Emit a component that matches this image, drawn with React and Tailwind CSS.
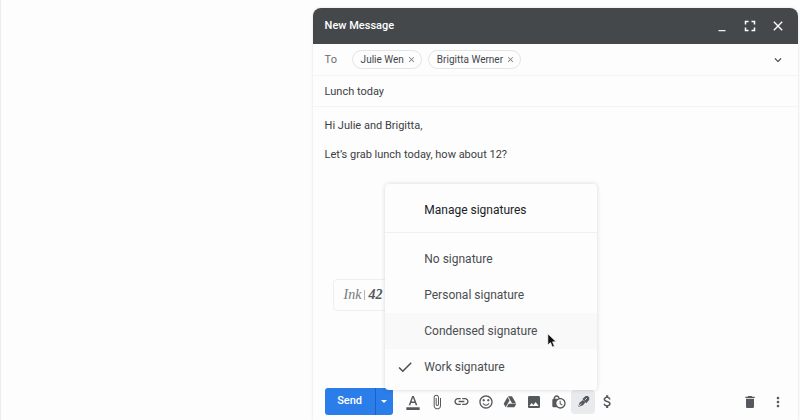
import {
    MdAttachFile,
    MdAttachMoney,
    MdCheck,
    MdClose,
    MdDelete,
    MdExpandMore,
    MdFullscreen,
    MdImage,
    MdInsertLink,
    MdLockClock,
    MdMinimize,
    MdMoreVert,
    MdOutlineFormatColorText,
    MdSentimentSatisfiedAlt,
} from 'react-icons/md';

const recipients = ['Julie Wen', 'Brigitta Werner'];

const signatures = [
    { name: 'No signature' },
    { name: 'Personal signature' },
    { name: 'Condensed signature', hovered: true },
    { name: 'Work signature', checked: true },
];

function DriveIcon({ className }) {
    return (
        <svg viewBox="0 0 24 24" fill="currentColor" className={className}>
            <path d="M7.71 3.5 1.15 15l3.43 6 6.55-11.5zM9.73 15 6.3 21h13.12l3.43-6zM22.28 14 15.42 2H8.58l6.86 12z" />
        </svg>
    );
}

function PenIcon({ className }) {
    return (
        <svg viewBox="0 0 24 24" fill="currentColor" className={className}>
            <path d="M2 22 5 14 11 9 15.500 13.500 11 19z" />
            <path d="m3 21 5-5" stroke="#e8eaed" strokeWidth="1.500" />
            <path d="M10 7.500 16 2h4l2.500 2.500V9l-5.500 6z" />
            <path d="m14.500 9.500 4-4" stroke="#e8eaed" strokeWidth="1.500" />
        </svg>
    );
}

function Cursor() {
    return (
        <svg viewBox="0 0 12 18" className="pointer-events-none absolute top-5 left-[162px] h-[15px] w-[10px]">
            <path d="M1 1v13.5l3.2-3 2.2 5.3 2.5-1-2.2-5.2H11z" fill="#111" stroke="#fff" strokeWidth="0.8" />
        </svg>
    );
}

function SignatureMenu() {
    return (
        <div
            role="menu"
            className="absolute right-[-2px] bottom-full z-10 w-[212px] rounded-sm bg-[#fdfdfd] pt-2 pb-[5px] text-xs text-[#4b4d50] shadow-[0_0_4px_rgba(0,0,0,0.16)]"
        >
            <button type="button" role="menuitem" className="flex h-9 w-full items-center pl-[39px] text-[#202124]">
                Manage signatures
            </button>
            <div className="mt-1 mb-2 border-t border-[#f0f0f0]" />
            {signatures.map((item) => (
                <button
                    key={item.name}
                    type="button"
                    role="menuitemradio"
                    aria-checked={!!item.checked}
                    className={`relative flex h-9 w-full items-center ${item.hovered ? 'bg-[#f9f9f9]' : ''}`}
                >
                    <span className="flex w-[39px] justify-center">{item.checked && <MdCheck className="size-[18px]" />}</span>
                    {item.name}
                    {item.hovered && <Cursor />}
                </button>
            ))}
        </div>
    );
}

function ToolButton({ label, children }) {
    return (
        <button type="button" aria-label={label} className="flex h-6 items-center justify-center">
            {children}
        </button>
    );
}

function Toolbar() {
    return (
        <div className="flex items-center pt-1 pr-2 pb-[5px] pl-3 text-[#55585c]">
            <div className="flex h-[27px] shrink-0 overflow-hidden rounded-[3px] bg-[#2b7de9] text-white">
                <button type="button" className="w-[50px] font-medium">
                    Send
                </button>
                <button type="button" aria-label="More send options" className="flex w-[18px] items-center justify-center border-l border-[#1b62c4]">
                    <svg viewBox="0 0 8 4" fill="currentColor" className="h-[3px] w-[6px]">
                        <path d="M0 0h8L4 4z" />
                    </svg>
                </button>
            </div>
            <div className="ml-2 grid w-[219px] shrink-0 grid-cols-9">
                <ToolButton label="Formatting options">
                    <MdOutlineFormatColorText className="size-4" />
                </ToolButton>
                <ToolButton label="Attach files">
                    <MdAttachFile className="size-4" />
                </ToolButton>
                <ToolButton label="Insert link">
                    <MdInsertLink className="size-[17px]" />
                </ToolButton>
                <ToolButton label="Insert emoji">
                    <MdSentimentSatisfiedAlt className="size-4" />
                </ToolButton>
                <ToolButton label="Insert files using Drive">
                    <DriveIcon className="size-[14px]" />
                </ToolButton>
                <ToolButton label="Insert photo">
                    <MdImage className="size-4" />
                </ToolButton>
                <ToolButton label="Toggle confidential mode">
                    <MdLockClock className="size-4" />
                </ToolButton>
                <div className="relative">
                    <button type="button" aria-label="Insert signature" className="flex h-6 w-full items-center justify-center rounded-sm bg-[#e8eaed]">
                        <PenIcon className="size-[13px]" />
                    </button>
                    <SignatureMenu />
                </div>
                <ToolButton label="Send money">
                    <MdAttachMoney className="size-[17px]" />
                </ToolButton>
            </div>
            <div className="ml-auto flex gap-1">
                <button type="button" aria-label="Discard draft" className="flex size-6 items-center justify-center">
                    <MdDelete className="size-4" />
                </button>
                <button type="button" aria-label="More options" className="flex size-6 items-center justify-center">
                    <MdMoreVert className="size-4" />
                </button>
            </div>
        </div>
    );
}

function App() {
    return (
        <div className="flex min-h-screen flex-col border-l border-[#ececec] bg-[#fdfdfd] pt-2 font-[Roboto,sans-serif] text-[11px] text-[#3c3e42]">
            <section className="mr-0.5 ml-[39%] flex flex-1 flex-col rounded-t-lg bg-[#fdfdfd] shadow-[0_0_3px_rgba(0,0,0,0.12)]">
                <header className="flex h-9 items-center rounded-t-lg bg-[#44484b] pr-2 pl-3 text-white">
                    <h1 className="font-medium">New Message</h1>
                    <div className="ml-auto flex gap-1">
                        <button type="button" aria-label="Minimize" className="flex size-6 items-center justify-center">
                            <MdMinimize className="size-[14px]" />
                        </button>
                        <button type="button" aria-label="Full screen" className="flex size-6 items-center justify-center">
                            <MdFullscreen className="size-[18px]" />
                        </button>
                        <button type="button" aria-label="Close" className="flex size-6 items-center justify-center">
                            <MdClose className="size-4" />
                        </button>
                    </div>
                </header>
                <div className="flex h-8 items-center border-b border-[#f4f4f4] pr-2 pl-3">
                    <span className="w-[27px] pt-0.5 text-[#6b6e72]">To</span>
                    <div className="flex gap-1.5">
                        {recipients.map((name) => (
                            <span key={name} className="flex h-[19px] items-center gap-[3px] rounded-full border border-[#e4e4e4] pr-[5px] pl-2 text-[10px] text-[#44474b]">
                                {name}
                                <button type="button" aria-label={`Remove ${name}`}>
                                    <MdClose className="size-[9px] text-[#77797c]" />
                                </button>
                            </span>
                        ))}
                    </div>
                    <button type="button" aria-label="Show Cc and Bcc" className="ml-auto flex size-6 items-center justify-center">
                        <MdExpandMore className="size-[14px]" />
                    </button>
                </div>
                <input
                    type="text"
                    aria-label="Subject"
                    defaultValue="Lunch today"
                    className="h-[31px] border-b border-[#f4f4f4] px-3 outline-none"
                />
                <div className="flex flex-1 flex-col px-3 pt-[11px] leading-4">
                    <p>Hi Julie and Brigitta,</p>
                    <p className="mt-[13px]">Let’s grab lunch today, how about 12?</p>
                    <div className="mt-auto mb-[73px] ml-2 flex h-8 w-24 items-center gap-0.5 rounded border border-[#efefef] pl-2.5 font-['Liberation_Serif',serif] text-sm text-[#77797c] italic">
                        <span>Ink</span>
                        <span className="h-2.5 border-l border-[#b5b5b5]" />
                        <span className="pl-0.5 font-bold text-[#55585c]">42</span>
                    </div>
                </div>
                <Toolbar />
            </section>
        </div>
    );
}

export default App;
